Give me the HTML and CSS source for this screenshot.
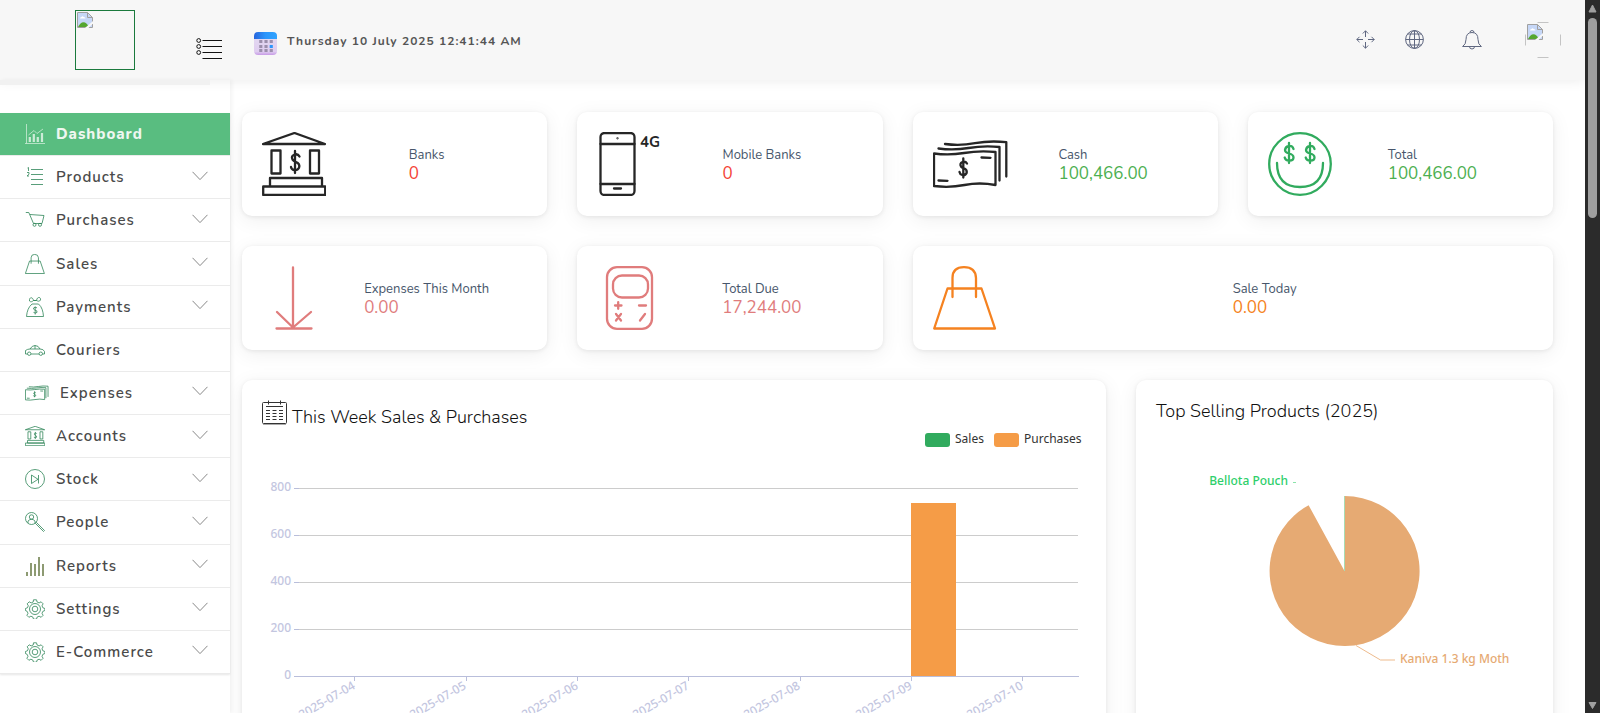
FILE: index.html
```html
<!DOCTYPE html>
<html lang="en">
<head>
<meta charset="utf-8">
<title>Dashboard</title>
<link rel="stylesheet" href="styles.css">
</head>
<body>
<svg class="sprite" aria-hidden="true">
  <symbol id="chevron" viewBox="0 0 16 10"><path d="M.5 .8 8 8.6 15.5.8"/></symbol>
  <symbol id="chart" viewBox="0 0 20 20"><path d="M1.500 0v19.500M0 19.500h20M3.500 11 9 6.500l3 3L18 5"/><path d="M4.800 18v-5M8.800 18v-8M12.800 18v-5M17 18V9" stroke-width="2.200"/></symbol>
  <symbol id="list" viewBox="0 0 20 20"><path d="M6 2.500h12M6 7.500h12M6 12.500h12M6 17.500h12M2.500 1 3.500.5V4M2 5.500h2v1.700L2 9h2"/></symbol>
  <symbol id="cart" viewBox="0 0 20 20"><path d="M.8 2.500h3l4.700 11H17L19 5.500 5 4.500"/><circle cx="9.500" cy="14.800" r="1.500"/><circle cx="15" cy="14.800" r="1.500"/></symbol>
  <symbol id="bag" viewBox="0 0 64 64"><path d="M1.200 62.500 14.500 22.500h34l13.500 40zM19.500 31V12Q19.500 1.200 31 1.200T43 12v19"/></symbol>
  <symbol id="money" viewBox="0 0 20 20"><path d="M7 7h6.500c3.500 3 4.500 7 5 12.500h-17C2 14 3.500 10 7 7zM4.500 4C4-.5 8 0 8.500 3.500h3C12-.5 16-.5 15.500 3c-1 2-3 1-4 .5h-3c-1 1-3 2-4 .5z"/><path d="M12 10.800q-2-1-3.200 0-1 1.500 1 2.200 3 .6 2.200 2.400-1.500 1.300-3.500 0M10.200 9.500v8"/></symbol>
  <symbol id="car" viewBox="0 0 20 20"><path d="M2.500 14H.5V10.500q2-1.500 4.500-1.500 2-3.500 5-3.500 3.500 0 5 3.500 3.500 0 4.500 2.500V14h-2M6 14h8M5 9h10M10 5.500V9"/><circle cx="4.200" cy="13.700" r="1.700"/><circle cx="15.800" cy="13.700" r="1.700"/></symbol>
  <symbol id="cash" viewBox="0 0 76 64"><path d="M1 21.500q15 2 30-.5t31.500-1v33q-16-3-31 0t-30.500 1zM5.500 16.500q15 2 30-.5t31-1V48.500M12 12q15 2 30-.8t31.300-1V44.500M5.500 48.500l9 .3M48.500 25.500l9 .3"/><path d="M34 31.500q-1.500-2.500-4.500-1.500-3.200 1.500-1.500 4.500.7 1 3 1.800 3.200 1.300 2.700 4.500-1.200 3-4.500 2.200-2.200-.5-2.700-3M30.300 26.500v19"/></symbol>
  <symbol id="bank" viewBox="0 0 64 64"><path d="M1 12 32.500 1 63 12zM9.500 18.500h9v23h-9zM48 18.500h9v23h-9zM8 46h52v8.500H8zM1.200 54.500h62v8.500H1.200z"/><path d="M37.500 24.500q-1.500-3-5-2-3.800 1.500-2 5 1 1.500 3 2.300 5 2 3.500 6-1.500 3-5 2.200-2.500-.5-3-3M33 19v22"/></symbol>
  <symbol id="play" viewBox="0 0 20 20"><circle cx="10" cy="10" r="9.500"/><path d="M6.500 6v8.500l6.500-4.200zM13.500 6v8.500"/></symbol>
  <symbol id="person" viewBox="0 0 20 20"><circle cx="6.500" cy="6.500" r="6"/><circle cx="6.500" cy="5" r="2.200"/><path d="M3 11V9q3.500-3.500 7 0v2M10.500 11.500l8 8 1-1-8-8z"/></symbol>
  <symbol id="bars" viewBox="0 0 20 20"><path d="M2 20v-4M6 20V7M10 20V8M14 20V1M18 20V8" stroke-width="2"/></symbol>
  <symbol id="gear" viewBox="0 0 20 20"><circle cx="10" cy="10" r="5.500"/><circle cx="10" cy="10" r="2.800"/><path d="M8.500.8h3l.6 2.200 2 .9 2-1.100 2 2-1.100 2 .9 2 2 .7v2l-2 .8-.9 2 1.100 2-2 2-2-1.100-2 .9-.6 2.100h-3l-.6-2.100-2-.9-2 1.100-2-2 1.100-2-.9-2L.4 11.500v-2l2-.7.9-2-1.100-2 2-2 2 1.100 2-.9z"/></symbol>
  <symbol id="broken" viewBox="0 0 16 16"><path d="M1 1h9.500L15 5.500V15H1z" fill="#c6d7f7"/><path d="M1 15q3-6 7-4.500 2 .5 4 4.500z" fill="#55a630"/><path d="M3 6.500q0-1.500 1.500-1.500 1-1.500 2.200 0Q8.500 5 8.500 6.500z" fill="#fff"/><path d="M.5 15.500V.5h10l5 5v10zM10.500.5v5h5" fill="none" stroke="#a0a0a0"/><path d="m8 16 8-7v2.500L11.500 16z" fill="#f7f7f7"/></symbol>
</svg>

<div class="window">
  <div class="page">
    <header class="topbar">
      <div class="brand">
        <a class="logo" href="#" aria-label="Home"><svg width="16" height="16"><use href="#broken"/></svg></a>
      </div>
      <button class="toggle" aria-label="Toggle menu">
        <svg width="26" height="23" viewBox="0 0 26 23" fill="none" stroke="#111"><path d="M6.500 3.500H26M6.500 9.500H26M6.500 15.500H26M6.500 21.500H26"/><circle cx="2.700" cy="3.500" r="1.900"/><circle cx="2.700" cy="9.500" r="1.900"/><circle cx="2.700" cy="15.500" r="1.900"/></svg>
      </button>
      <div class="clock">
        <svg width="23" height="23" viewBox="0 0 22 23" preserveAspectRatio="none">
          <defs><linearGradient id="calTop"><stop offset="0" stop-color="#2765dd"/><stop offset=".5" stop-color="#2b95fb"/><stop offset="1" stop-color="#2fa3ff"/></linearGradient><linearGradient id="calBody" x2="0" y2="1"><stop offset="0" stop-color="#e4dcf0"/><stop offset=".85" stop-color="#dfcdf0"/><stop offset="1" stop-color="#c79ae6"/></linearGradient></defs>
          <rect width="22" height="23" rx="4" fill="url(#calBody)"/><path d="M0 7V4q0-4 4-4h14q4 0 4 4v3z" fill="url(#calTop)"/>
          <path d="M5 8h3v3H5zM10 8h3v3h-3zM15 8h3v3h-3zM5 13h3v3H5zM10 13h3v3h-3zM5 17h3v3H5zM10 17h3v3h-3zM15 17h3v3h-3z" fill="#9c8fac"/><path d="M15 13h3v3h-3z" fill="#2b95fb"/>
        </svg>
        <time>Thursday 10 July 2025 12:41:44 AM</time>
      </div>
      <div class="tools">
        <button class="tool" aria-label="Full screen"><svg width="19" height="19" viewBox="0 0 19 19"><path d="M9.500 7V.8M6.800 3.500 9.500.8l2.700 2.700M9.500 12v6.200M6.800 15.500l2.700 2.700 2.700-2.700M7 9.500H.8M3.500 6.800.8 9.500l2.700 2.700M12 9.500h6.200M15.500 6.800l2.700 2.700-2.700 2.700"/></svg></button>
        <button class="tool tool-globe" aria-label="Language"><svg width="19" height="19" viewBox="0 0 19 19"><circle cx="9.500" cy="9.500" r="8.900"/><ellipse cx="9.500" cy="9.500" rx="5" ry="8.900"/><path d="M9.500.6v17.800M.6 9.500h17.800M2.500 4h14M2.500 15h14"/></svg></button>
        <button class="tool tool-bell" aria-label="Notifications"><svg width="20" height="20" viewBox="0 0 20 20"><path d="M.6 16.500q3.400-2 3.400-7 0-7 6-7t6 7q0 5 3.400 7zM8 2.500q0-2 2-2t2 2M7.500 16.500q0 2.500 2.500 2.500t2.500-2.500"/></svg></button>
        <button class="avatar" aria-label="Account"><svg width="36" height="36" viewBox="0 0 36 36"><path d="M12.500.5h11M12.500 35.500h11M.5 12.500v11M35.500 12.500v11" stroke="#c4c4c4" fill="none"/><svg x="2" y="2" width="16" height="16"><use href="#broken"/></svg></svg></button>
      </div>
    </header>

    <div class="columns">
      <nav class="sidebar" aria-label="Main">
        <ul class="menu">
          <li><a class="item active" href="#"><svg class="glyph" width="20" height="20"><use href="#chart"/></svg><span>Dashboard</span></a></li>
          <li><button class="item"><svg class="glyph" width="20" height="20"><use href="#list"/></svg><span>Products</span><svg class="chev" width="16" height="10"><use href="#chevron"/></svg></button></li>
          <li><button class="item"><svg class="glyph" width="20" height="20"><use href="#cart"/></svg><span>Purchases</span><svg class="chev" width="16" height="10"><use href="#chevron"/></svg></button></li>
          <li><button class="item"><svg class="glyph wide" width="20" height="20"><use href="#bag"/></svg><span>Sales</span><svg class="chev" width="16" height="10"><use href="#chevron"/></svg></button></li>
          <li><button class="item"><svg class="glyph" width="20" height="20"><use href="#money"/></svg><span>Payments</span><svg class="chev" width="16" height="10"><use href="#chevron"/></svg></button></li>
          <li><a class="item" href="#"><svg class="glyph" width="20" height="20"><use href="#car"/></svg><span>Couriers</span></a></li>
          <li><button class="item"><svg class="glyph wide" width="24" height="20"><use href="#cash"/></svg><span>Expenses</span><svg class="chev" width="16" height="10"><use href="#chevron"/></svg></button></li>
          <li><button class="item"><svg class="glyph wide" width="20" height="20"><use href="#bank"/></svg><span>Accounts</span><svg class="chev" width="16" height="10"><use href="#chevron"/></svg></button></li>
          <li><button class="item"><svg class="glyph" width="20" height="20"><use href="#play"/></svg><span>Stock</span><svg class="chev" width="16" height="10"><use href="#chevron"/></svg></button></li>
          <li><button class="item"><svg class="glyph" width="20" height="20"><use href="#person"/></svg><span>People</span><svg class="chev" width="16" height="10"><use href="#chevron"/></svg></button></li>
          <li><button class="item"><svg class="glyph soft" width="20" height="20"><use href="#bars"/></svg><span>Reports</span><svg class="chev" width="16" height="10"><use href="#chevron"/></svg></button></li>
          <li><button class="item"><svg class="glyph" width="20" height="20"><use href="#gear"/></svg><span>Settings</span><svg class="chev" width="16" height="10"><use href="#chevron"/></svg></button></li>
          <li><button class="item"><svg class="glyph" width="20" height="20"><use href="#gear"/></svg><span>E-Commerce</span><svg class="chev" width="16" height="10"><use href="#chevron"/></svg></button></li>
        </ul>
      </nav>

      <main class="board">
        <section class="card stat"><svg class="pic" width="64" height="64"><use href="#bank"/></svg><div class="figure"><p class="label">Banks</p><p class="value red">0</p></div></section>
        <section class="card stat"><svg class="pic" width="64" height="64" viewBox="0 0 64 64"><rect x="3.500" y="1" width="34" height="62" rx="4"/><path d="M3.500 12h34M3.500 52h34M17 56.500h7"/><circle cx="20.500" cy="6.300" r=".4" stroke-width="1.500"/><text x="43" y="15" class="tag">4G</text></svg><div class="figure"><p class="label">Mobile Banks</p><p class="value red">0</p></div></section>
        <section class="card stat"><svg class="pic" width="76" height="64"><use href="#cash"/></svg><div class="figure"><p class="label">Cash</p><p class="value green">100,466.00</p></div></section>
        <section class="card stat"><svg class="pic pic-green" width="64" height="64" viewBox="0 0 64 64"><circle cx="32" cy="32" r="30.800"/><path d="M9 31q0 24 23 24t23-24"/><path d="M25.500 17q-1-3.500-4.500-3t-4 4q0 2.500 4 3.500 4.500 1 4.500 4t-4 3.200-4.800-3.200M21 11v20M46.500 17q-1-3.500-4.500-3t-4 4q0 2.500 4 3.500 4.500 1 4.500 4t-4 3.200-4.800-3.200M42 11v20"/></svg><div class="figure"><p class="label">Total</p><p class="value green">100,466.00</p></div></section>

        <section class="card stat"><svg class="pic pic-rose" width="64" height="64" viewBox="0 0 64 64"><path d="M31 1.500V61M15 46l16 15.500L49 46M14.500 62.500h35"/></svg><div class="figure"><p class="label">Expenses This Month</p><p class="value rose">0.00</p></div></section>
        <section class="card stat"><svg class="pic pic-rose" width="64" height="64" viewBox="0 0 64 64"><rect x="10" y="1.200" width="45" height="61.600" rx="10"/><rect x="16" y="9.500" width="35" height="22" rx="9"/><path d="M18 39.500h6.500M21.200 36.200v6.600M42 39.500h7"/><path d="m19 48 5 6.500M24 48l-5 6.500M48 48l-5 6.500"/></svg><div class="figure"><p class="label">Total Due</p><p class="value rose">17,244.00</p></div></section>
        <section class="card stat stat-wide"><svg class="pic pic-orange" width="64" height="64"><use href="#bag"/></svg><div class="figure"><p class="label">Sale Today</p><p class="value orange">0.00</p></div></section>

        <section class="card panel panel-bars">
          <h2 class="title title-icon"><svg width="25" height="25" viewBox="0 0 25 25" fill="none" stroke="#333"><rect x=".5" y="2.500" width="24" height="21" rx="1"/><path d="M4 6.500h17M6.500.5v4M18.500.5v4"/><path d="M4 10.500h17M4 13.500h17M4 16.500h17M4 19.500h17" stroke-dasharray="4 2.500"/><path d="M1 24.500h23" stroke="#aaa"/></svg>This Week Sales &amp; Purchases</h2>
          <svg class="chart" viewBox="0 0 824 380" role="img" aria-label="Sales and purchases per day">
            <g class="legend"><rect x="663" y="3" width="25" height="14" rx="3" fill="#31ab5e"/><text x="693" y="13">Sales</text><rect x="732" y="3" width="25" height="14" rx="3" fill="#f59c47"/><text x="762" y="13">Purchases</text></g>
            <path class="grid" d="M37 58.500h779M37 105.500h779M37 152.500h779M37 199.500h779"/>
            <rect x="649" y="73" width="45" height="173" fill="#f59c47"/>
            <path class="axis" d="M32 58.500h5M32 105.500h5M32 152.500h5M32 199.500h5M32 246.500h785M92.500 247v4M204.500 247v4M315.500 247v4M426.500 247v4M538.500 247v4M649.500 247v4M760.500 247v4"/>
            <g class="scale"><text x="29" y="61">800</text><text x="29" y="108">600</text><text x="29" y="155">400</text><text x="29" y="202">200</text><text x="29" y="249">0</text>
            <text transform="translate(94 258) rotate(-30)">2025-07-04</text><text transform="translate(205 258) rotate(-30)">2025-07-05</text><text transform="translate(317 258) rotate(-30)">2025-07-06</text><text transform="translate(428 258) rotate(-30)">2025-07-07</text><text transform="translate(539 258) rotate(-30)">2025-07-08</text><text transform="translate(651 258) rotate(-30)">2025-07-09</text><text transform="translate(762 258) rotate(-30)">2025-07-10</text></g>
          </svg>
        </section>
        <section class="card panel panel-pie">
          <h2 class="title">Top Selling Products (2025)</h2>
          <svg class="chart strong" viewBox="0 0 377 380" role="img" aria-label="Top selling products">
            <path d="M188.500 141V66A75 75 0 1 1 152.600 75.200z" fill="#e6aa73"/>
            <path d="M188.500 66v75" stroke="#a8dcb4"/>
            <path d="m200 215.500 24.500 14.500H239" fill="none" stroke="#eebb8d"/><path d="M137 52.500h3" stroke="#8be3ab"/>
            <text x="132" y="55" text-anchor="end" fill="#2ecf6b">Bellota Pouch</text><text x="244" y="233" fill="#e6aa73">Kaniva 1.3 kg Moth</text>
          </svg>
        </section>
      </main>
    </div>
  </div>
  <div class="scrollbar" aria-hidden="true">
    <svg width="15" height="18" viewBox="0 0 15 18"><path d="M4 12 7.500 5 11 12z" fill="#9f9f9f" stroke="#9f9f9f" stroke-linejoin="round"/></svg>
    <div class="thumb"></div>
    <svg class="down" width="15" height="18" viewBox="0 0 15 18"><path d="M4 7.500 7.500 13.500 11 7.500z" fill="#9f9f9f" stroke="#9f9f9f" stroke-linejoin="round"/></svg>
  </div>
</div>
</body>
</html>
```
FILE: styles.css
```css
* { box-sizing: border-box; }

body {
  margin: 0;
  font-family: Nunito, Lato, sans-serif;
  background: #fff;
  color: #212529;
}

button {
  font: inherit;
  color: inherit;
  background: none;
  border: 0;
  padding: 0;
  text-align: left;
  cursor: pointer;
}

a { color: inherit; text-decoration: none; }
p, h2, ul { margin: 0; padding: 0; }
svg { display: block; flex: none; }
.sprite { position: absolute; width: 0; height: 0; }

.window { display: flex; height: 100vh; overflow: hidden; }
.page { flex: 1; min-width: 0; display: flex; flex-direction: column; }

/* top bar */
.topbar {
  flex: none;
  display: flex;
  height: 80px;
  padding-right: 24px;
  background: #f7f7f7;
  box-shadow: 0 1px 12px rgba(0, 0, 0, .08);
}
.brand { width: 196px; padding: 10px 0 0 75px; }
.logo {
  display: block;
  width: 60px;
  height: 60px;
  padding: 1px;
  border: 1px solid #1b7a3d;
}
.toggle { align-self: flex-start; padding-top: 37px; }
.clock { display: flex; gap: 10px; padding: 32px 0 0 32px; }
.clock time {
  font-size: 12px;
  line-height: 18px;
  font-weight: 700;
  letter-spacing: 1px;
  color: #555;
}
.tools { display: flex; align-items: center; margin-left: auto; padding-bottom: 1px; }
.tool svg { fill: none; stroke: #5f6780; }
.tool-globe { margin-left: 30px; }
.tool-bell { margin-left: 38px; }
.avatar { margin-left: 43px; }

/* side menu */
.columns { flex: 1; min-height: 0; display: flex; }
.sidebar {
  flex: none;
  width: 230px;
  box-shadow: 2px 0 4px rgba(0, 0, 0, .05);
}
.sidebar::before {
  content: "";
  display: block;
  width: 210px;
  height: 5px;
  margin-bottom: 28px;
  background: #f1f1f1;
}
.menu {
  display: grid;
  grid-auto-rows: 1fr;
  min-height: 561px;
  list-style: none;
  box-shadow: 0 1px 2px rgba(0, 0, 0, .1);
}
.item {
  display: flex;
  align-items: center;
  gap: 11px;
  width: 100%;
  height: 100%;
  padding: 0 22px 0 25px;
  border-bottom: 1px solid #ebebeb;
  font-size: 15px;
  font-weight: 600;
  letter-spacing: 1px;
  color: #4a4a4a;
}
.active { background: #59bd80; color: #eef7f0; font-weight: 800; }
.glyph { fill: none; stroke: #2f8558; stroke-width: .8; }
.glyph.wide { stroke-width: 2.5; }
.glyph.soft { stroke: #8d9a72; }
.active .glyph { stroke: #cdebd7; }
.chev { margin: -3px 0 0 auto; fill: none; stroke: #888; }

/* dashboard grid */
.board {
  flex: 1;
  min-width: 0;
  display: grid;
  grid-template-columns: repeat(12, minmax(0, 1fr));
  align-content: start;
  gap: 30px;
  padding: 32px 32px 32px 12px;
  overflow: hidden;
}
.card {
  padding: 20px;
  border-radius: 10px;
  background: #fff;
  box-shadow: 0 4px 20px 1px rgba(0, 0, 0, .06), 0 1px 4px rgba(0, 0, 0, .08);
}
.stat { grid-column: span 3; display: flex; align-items: center; }
.stat-wide { grid-column: span 6; }
.figure { margin: 0 auto; }
.label { font-size: 13px; line-height: 20px; color: #47566b; }
.value { font-size: 17px; line-height: 18px; }
.red { color: #f44336; }
.green { color: #4caf50; }
.rose { color: #e07c7c; }
.orange { color: #f58220; }

.pic {
  fill: none;
  stroke: #262626;
  stroke-width: 2.3;
  stroke-linecap: round;
  stroke-linejoin: round;
}
.pic-green { stroke: #31ab5e; }
.pic-rose { stroke: #e07c7c; }
.pic-orange { stroke: #f58220; }
.tag { font-size: 15px; font-weight: 700; fill: #262626; stroke: none; }

/* charts */
.panel-bars { grid-column: span 8; }
.panel-pie { grid-column: span 4; }
.title { height: 30px; font-size: 18px; line-height: 22px; font-weight: 350; color: #111; }
.title-icon { display: flex; gap: 5px; line-height: 34px; }
.chart { width: 100%; height: auto; font-family: "Noto Sans", sans-serif; font-size: 12px; }
.strong { font-weight: 500; }
.legend { fill: #333; }
.grid { stroke: #ccc; }
.axis { stroke: #b9bedb; }
.scale { fill: #c3c6df; font-weight: 500; text-anchor: end; }

/* scroll strip */
.scrollbar { flex: none; display: flex; flex-direction: column; width: 15px; background: #2b2b2b; }
.thumb { width: 9px; height: 28%; margin-left: 3px; border-radius: 5px; background: #9f9f9f; }
.down { margin-top: auto; }
```
